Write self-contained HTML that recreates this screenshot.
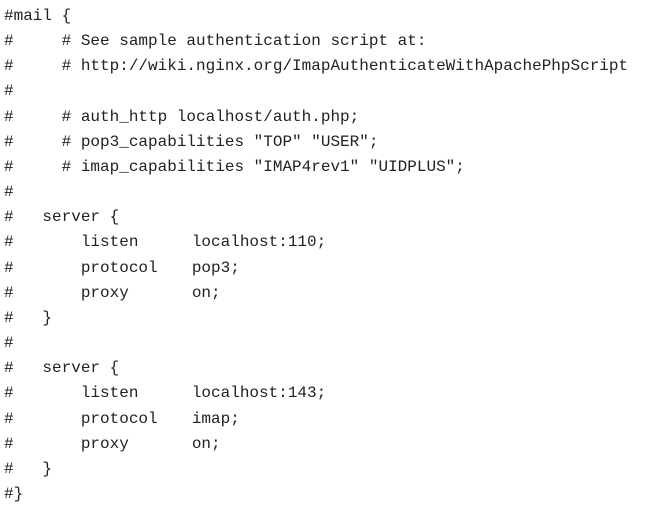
<!DOCTYPE html>
<html><head><meta charset="utf-8"><style>
html,body{margin:0;padding:0;background:#fff;width:646px;height:511px;overflow:hidden}
pre{margin:0;position:absolute;left:4px;top:4px;font-family:"Liberation Mono",monospace;font-size:16px;line-height:25.16px;color:#222;white-space:pre}
.k{display:inline-block;width:111px}
</style></head><body><pre>#mail {
#     # See sample authentication script at:
#     # http://wiki.nginx.org/ImapAuthenticateWithApachePhpScript
#
#     # auth_http localhost/auth.php;
#     # pop3_capabilities "TOP" "USER";
#     # imap_capabilities "IMAP4rev1" "UIDPLUS";
#
#   server {
#       <span class="k">listen</span>localhost:110;
#       <span class="k">protocol</span>pop3;
#       <span class="k">proxy</span>on;
#   }
#
#   server {
#       <span class="k">listen</span>localhost:143;
#       <span class="k">protocol</span>imap;
#       <span class="k">proxy</span>on;
#   }
#}</pre></body></html>
